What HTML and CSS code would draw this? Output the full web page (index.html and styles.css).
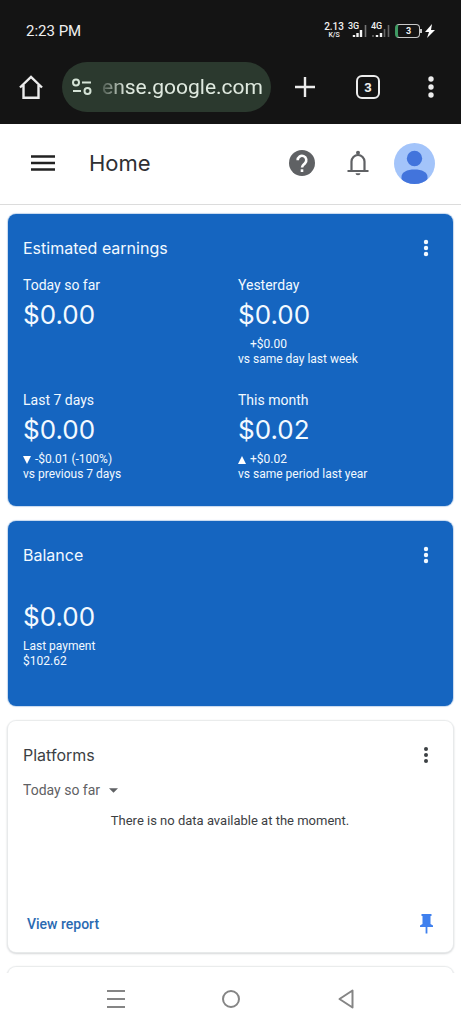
FILE: index.html
```html
<!DOCTYPE html>
<html lang="en">
<head>
<meta charset="utf-8">
<meta name="viewport" content="width=device-width, initial-scale=1">
<title>Home</title>
<link rel="stylesheet" href="styles.css">
</head>
<body>
<div class="screen">
  <div class="chrome">
    <div class="status">
      <span class="clock">2:23 PM</span>
      <div class="indicators">
        <div class="speed"><span>2.13</span><span>K/S</span></div>
        <div class="signal">
          <span class="net">3G</span>
          <svg class="bars" width="18" height="12" viewBox="0 0 18 12" aria-hidden="true"><path d="M5 10v2M8.500 8v4M12 5v7" stroke="#f4f4f4" stroke-width="2.400"/><path d="M16.500 0v12" stroke="#777" stroke-width="1.600"/></svg>
        </div>
        <div class="signal">
          <span class="net">4G</span>
          <svg class="bars" width="18" height="12" viewBox="0 0 18 12" aria-hidden="true"><path d="M1 10v2M12.500 4v8M16.500 0v12" stroke="#666" stroke-width="1.600"/><path d="M5 10v2M9 8v4" stroke="#f4f4f4" stroke-width="2.400"/></svg>
        </div>
        <div class="battery"><span>3</span></div>
        <svg class="bolt" width="10" height="14" viewBox="0 0 10 14" aria-hidden="true"><path d="M7 0 0 8h4l-2 6 8-8H6z" fill="#fff"/></svg>
      </div>
    </div>
    <div class="toolbar">
      <button class="tool" aria-label="Home page">
        <svg width="24" height="24" viewBox="0 0 24 24" fill="none" stroke="#ececec" stroke-width="2.400" stroke-linejoin="miter"><path d="M1 12.500 12 2l11 10.500M4.500 10v12.800h15V10"/></svg>
      </button>
      <div class="address">
        <button class="site" aria-label="Site settings">
          <svg width="20" height="18" viewBox="0 0 20 18" fill="none" stroke="#d5e3d6" stroke-width="2"><circle cx="4" cy="4.500" r="3"/><path d="M10 4.500h9M1 13h8"/><circle cx="15.500" cy="13" r="3"/></svg>
        </button>
        <input class="url" type="text" aria-label="Address" value="ense.google.com">
      </div>
      <div class="tools">
        <button class="tool" aria-label="New tab">
          <svg width="22" height="22" viewBox="0 0 22 22" stroke="#ececec" stroke-width="2.400"><path d="M11 1v20M1 11h20"/></svg>
        </button>
        <button class="tool" aria-label="Open tabs"><span class="tabs">3</span></button>
        <button class="tool" aria-label="Browser menu">
          <svg width="6" height="22" viewBox="0 0 6 22" fill="#ececec"><circle cx="3" cy="3" r="2.700"/><circle cx="3" cy="11" r="2.700"/><circle cx="3" cy="19" r="2.700"/></svg>
        </button>
      </div>
    </div>
  </div>

  <header class="appbar">
    <button class="icon" aria-label="Main menu">
      <svg width="24" height="18" viewBox="0 0 24 18" stroke="#222" stroke-width="2.400"><path d="M0 2.500h24M0 9h24M0 15.500h24"/></svg>
    </button>
    <h1 class="page-title">Home</h1>
    <div class="account">
      <button class="icon" aria-label="Help">
        <svg width="26" height="26" viewBox="0 0 26 26"><circle cx="13" cy="13" r="13" fill="#5f6164"/><path d="M8.700 10.200a4.300 4.300 0 1 1 7.300 3c-1.500 1.500-3 2.100-3 4.300" fill="none" stroke="#fff" stroke-width="2.600"/><rect x="11.700" y="19.300" width="2.600" height="2.700" fill="#fff"/></svg>
      </button>
      <button class="icon" aria-label="Notifications">
        <svg width="22" height="26" viewBox="0 0 22 26"><path d="M4.500 21v-9.500a6.500 6.500 0 0 1 13 0V21M.500 21h21" fill="none" stroke="#5f6164" stroke-width="2.200"/><circle cx="11" cy="2.800" r="2" fill="#5f6164"/><path d="M8.500 23.300h5a2.500 2 0 0 1-5 0z" fill="#5f6164"/></svg>
      </button>
      <button class="avatar" aria-label="Account">
        <svg width="41" height="41" viewBox="0 0 41 41"><defs><clipPath id="disc"><circle cx="20.500" cy="20.500" r="20.500"/></clipPath></defs><g clip-path="url(#disc)"><path fill="#a3c4fa" d="M0 0h41v41H0z"/><circle cx="20.500" cy="15.500" r="7.700" fill="#4274dc"/><path d="M7.500 34c0-5 5.500-7.500 13-7.500s13 2.500 13 7.500v7h-26z" fill="#4274dc"/></g></svg>
      </button>
    </div>
  </header>

  <main class="cards">
    <section class="card blue">
      <div class="head">
        <h2>Estimated earnings</h2>
        <button class="more" aria-label="Estimated earnings options"><svg width="6" height="18" viewBox="0 0 6 18" fill="currentColor"><circle cx="3" cy="3" r="2.200"/><circle cx="3" cy="9" r="2.200"/><circle cx="3" cy="15" r="2.200"/></svg></button>
      </div>
      <div class="metrics">
        <div class="metric"><p class="label">Today so far</p><p class="amount">$0.00</p></div>
        <div class="metric"><p class="label">Yesterday</p><p class="amount">$0.00</p>
          <p class="note"><span class="trend"></span>+$0.00</p><p class="note">vs same day last week</p></div>
        <div class="metric"><p class="label">Last 7 days</p><p class="amount">$0.00</p>
          <p class="note"><span class="trend"><svg width="8" height="8" viewBox="0 0 8 8"><path d="M0 0h8L4 8z" fill="#fff"/></svg></span>-$0.01 (-100%)</p><p class="note">vs previous 7 days</p></div>
        <div class="metric"><p class="label">This month</p><p class="amount">$0.02</p>
          <p class="note"><span class="trend"><svg width="8" height="8" viewBox="0 0 8 8"><path d="M0 8h8L4 0z" fill="#fff"/></svg></span>+$0.02</p><p class="note">vs same period last year</p></div>
      </div>
    </section>

    <section class="card blue">
      <div class="head">
        <h2>Balance</h2>
        <button class="more" aria-label="Balance options"><svg width="6" height="18" viewBox="0 0 6 18" fill="currentColor"><circle cx="3" cy="3" r="2.200"/><circle cx="3" cy="9" r="2.200"/><circle cx="3" cy="15" r="2.200"/></svg></button>
      </div>
      <div class="balance">
        <p class="amount">$0.00</p>
        <p class="note">Last payment</p>
        <p class="note">$102.62</p>
      </div>
    </section>

    <section class="card report-card">
      <div class="head">
        <h2>Platforms</h2>
        <button class="more" aria-label="Platforms options"><svg width="6" height="18" viewBox="0 0 6 18" fill="currentColor"><circle cx="3" cy="3" r="2"/><circle cx="3" cy="9" r="2"/><circle cx="3" cy="15" r="2"/></svg></button>
      </div>
      <div class="range">
        <select class="range-select" aria-label="Date range"><option>Today so far</option></select>
        <svg class="caret" width="9" height="5" viewBox="0 0 10 5" aria-hidden="true"><path d="M0 0h10L5 5z" fill="#5f6164"/></svg>
      </div>
      <p class="empty">There is no data available at the moment.</p>
      <div class="foot">
        <a class="report" href="#report">View report</a>
        <button class="more" aria-label="Unpin card"><svg width="13" height="20" viewBox="0 0 13 20"><path d="M1.500 0h10v2h-1v8l2.500 1.500V13H0v-1.500L2.500 10V2h-1z" fill="#3f80ee"/><path d="M6.500 12v7.500" stroke="#3f80ee" stroke-width="1.800"/></svg></button>
      </div>
    </section>

    <div class="card next"></div>
  </main>

  <nav class="sysnav" aria-label="System">
    <button class="icon" aria-label="Recent apps"><svg width="18" height="20" viewBox="0 0 18 20" stroke="#858585" stroke-width="2"><path d="M0 2h18M0 10h18M0 18h18"/></svg></button>
    <button class="icon" aria-label="Home screen"><svg width="20" height="20" viewBox="0 0 20 20" fill="none" stroke="#858585" stroke-width="2"><circle cx="10" cy="10" r="8"/></svg></button>
    <button class="icon" aria-label="Back"><svg width="18" height="20" viewBox="0 0 18 20" fill="none" stroke="#858585" stroke-width="2" stroke-linejoin="round"><path d="M15.500 1.500v17L2.500 10z"/></svg></button>
  </nav>
</div>
</body>
</html>
```
FILE: styles.css
```css
* { box-sizing: border-box; }
body { margin: 0; background: #fff; font-family: Roboto, "Liberation Sans", sans-serif; color: #3c4043; }
h1, h2, p { margin: 0; font-weight: 400; }
button { display: flex; align-items: center; justify-content: center; margin: 0; padding: 0; border: 0; background: none; color: inherit; font: inherit; cursor: pointer; }
svg { display: block; flex: none; }

.screen { display: flex; flex-direction: column; height: 100vh; overflow: hidden; }

.chrome { flex: none; background: #141414; color: #f0f0f0; padding-bottom: 12px; }
.status { display: flex; align-items: center; justify-content: space-between; height: 62px; padding: 0 26px; }
.clock { font-size: 15px; }
.indicators { display: flex; align-items: center; gap: 5px; }
.speed { display: flex; flex-direction: column; align-items: center; font-size: 10px; line-height: 8px; font-weight: 500; }
.speed span:last-child { font-size: 7px; }
.signal { position: relative; }
.net { position: absolute; left: -1px; top: -3px; font-size: 9px; line-height: 9px; font-weight: 500; }
.battery { position: relative; display: flex; align-items: center; justify-content: center; width: 25px; height: 14px; border: 1px solid #c8c8c8; border-left: 3px solid #3f9a63; border-radius: 4px; font-size: 9px; font-weight: 700; }
.battery::after { content: ""; position: absolute; right: -3px; top: 4px; width: 2px; height: 4px; background: #c8c8c8; }

.toolbar { display: flex; align-items: center; }
.toolbar > .tool { width: 62px; }
.tool { width: 48px; height: 48px; }
.address { flex: 1; min-width: 0; display: flex; align-items: center; gap: 10px; height: 50px; padding: 0 9px 0 10px; border-radius: 25px; background: #2b392e; }
.site { flex: none; height: 40px; }
.url { flex: 1; min-width: 0; padding: 0; border: 0; outline: 0; background: none; color: #dfe9df; font: 21px/32px Roboto, sans-serif; -webkit-mask-image: linear-gradient(90deg, rgba(0,0,0,.2), #000 24px); mask-image: linear-gradient(90deg, rgba(0,0,0,.2), #000 24px); }
.tools { display: flex; gap: 15px; padding: 0 6px 0 10px; }
.tabs { display: flex; align-items: center; justify-content: center; width: 24px; height: 24px; border: 2px solid #ececec; border-radius: 6px; font-size: 13px; font-weight: 700; }

.appbar { flex: none; display: flex; align-items: center; height: 81px; padding: 0 26px 2px 23px; border-bottom: 1px solid #dcdcdc; }
.icon { width: 40px; height: 40px; }
.page-title { flex: 1; margin-left: 26px; font: 400 22px/32px Inter, sans-serif; color: #2f3033; }
.account { display: flex; align-items: center; gap: 16px; }

.cards { flex: 1; min-height: 0; overflow: hidden; display: flex; flex-direction: column; gap: 15px; padding: 9px 8px 0; }
.card { flex: none; padding: 16px 16px 16px 15px; border-radius: 8px; background: #fff; box-shadow: 0 0 1px 1px #e9ebec, 0 1px 2px 1px #d6d8da; }
.blue { background: #1565c0; color: #f2f9ff; box-shadow: 0 0 1px 1px #c5d8ee; }
.head { display: flex; align-items: center; justify-content: space-between; height: 36px; }
.head h2 { font: 400 16px/24px Inter, sans-serif; }
.more { width: 22px; height: 36px; }
.metrics { display: grid; grid-template-columns: 1fr 1fr; gap: 24px 16px; padding: 10px 0 8px; }
.label { font-size: 14px; line-height: 18px; }
.amount { font: 400 26px/32px Inter, sans-serif; margin: 5px 0 6px; }
.note { display: flex; align-items: center; font-size: 12px; line-height: 15px; }
.trend { width: 12px; }
.balance { display: flow-root; padding: 23px 0 21px; }

.report-card { padding-bottom: 10px; }
.range { display: flex; align-items: center; gap: 8px; margin-top: 5px; }
.range-select { appearance: none; margin: 0; padding: 0 18px 0 0; border: 0; outline: 0; background: none; color: #5f6164; font: 14px/24px Roboto, sans-serif; }
.caret { margin-left: -18px; pointer-events: none; }
.empty { margin-top: 9px; text-align: center; font-size: 13px; line-height: 20px; }
.foot { display: flex; align-items: center; justify-content: space-between; margin-top: 75px; padding-left: 4px; }
.report { color: #2a6ab2; font-size: 14px; line-height: 24px; font-weight: 500; text-decoration: none; }
.next { min-height: 80px; }

.sysnav { flex: none; display: flex; align-items: center; height: 51px; padding: 0 58px; background: #fff; }
.sysnav .icon { flex: 1; }
```
